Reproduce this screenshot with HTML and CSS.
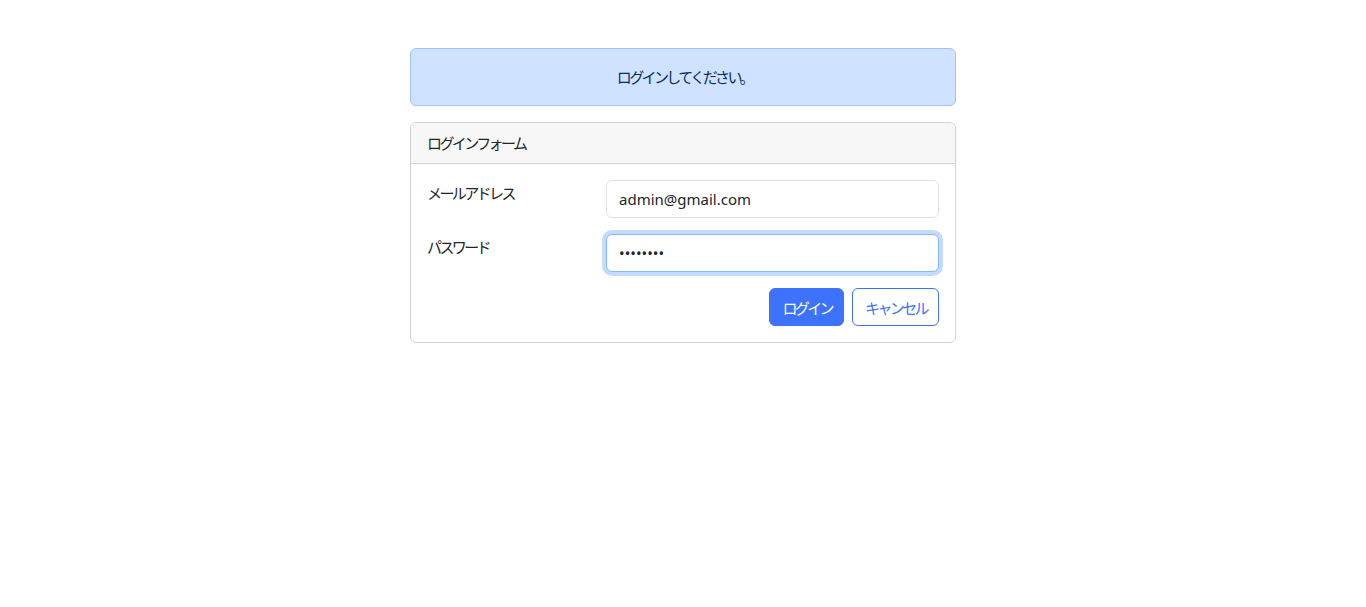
FILE: index.html
```html
<!DOCTYPE html>
<html lang="ja">
<head>
<meta charset="utf-8">
<title>ログイン</title>
<link rel="stylesheet" href="styles.css">
</head>
<body>
<div class="container">
  <div class="alert">ログインしてください。</div>
  <div class="card">
    <div class="card-header">ログインフォーム</div>
    <form class="card-body">
      <div class="row">
        <label class="label" for="email">メールアドレス</label>
        <div class="field"><input id="email" class="input" type="text" value="admin@gmail.com"></div>
      </div>
      <div class="row">
        <label class="label" for="pw">パスワード</label>
        <div class="field"><input id="pw" class="input focus" type="password" value="password"></div>
      </div>
      <div class="actions">
        <button type="button" class="btn btn-primary">ログイン</button>
        <button type="button" class="btn btn-outline">キャンセル</button>
      </div>
    </form>
  </div>
</div>
</body>
</html>
```
FILE: styles.css
```css
* { box-sizing: border-box; }
body {
  margin: 0;
  background: #fff;
  color: #212529;
  font-family: "Noto Sans", "Noto Sans CJK JP", sans-serif;
  font-size: 15px;
  line-height: 24px;
}
.container {
  width: 546px;
  margin: 48px auto 0;
}
.alert, .card-header, .label, .btn {
  font-family: "Noto Sans CJK JP", sans-serif;
  font-size: 15px;
  letter-spacing: -2.6px;
}
.alert {
  background: #cfe2ff;
  border: 1px solid #9ec5fe;
  color: #052c65;
  border-radius: 6px;
  padding: 16px 16px 16px 19px;
  text-align: center;
  margin-bottom: 16px;
}
.card {
  border: 1px solid #d3d3d3;
  border-radius: 6px;
  overflow: hidden;
}
.card-header {
  background: #f7f7f7;
  border-bottom: 1px solid #d3d3d3;
  padding: 8px 16px;
}
.card-body {
  padding: 16px;
  margin: 0;
}
.row {
  display: flex;
  margin-bottom: 16px;
}
.label {
  width: 179px;
  flex: none;
  padding-top: 1px;
}
.field { flex: 1; }
.input {
  display: block;
  width: 100%;
  height: 38px;
  padding: 6px 12px;
  border: 1px solid #dee2e6;
  border-radius: 6px;
  font-family: "Noto Sans", sans-serif;
  font-size: 15px;
  color: #212529;
  background: #fff;
  outline: none;
}
.input.focus {
  border-color: #86b7fe;
  box-shadow: 0 0 0 4px rgba(13, 110, 253, 0.25);
}
.actions {
  display: flex;
  justify-content: flex-end;
  gap: 8px;
}
.btn {
  height: 38px;
  padding: 0 11px 0 12px;
  border-radius: 6px;
  cursor: pointer;
}
.btn-primary {
  background: #3d72fd;
  border: 1px solid #3d72fd;
  color: #fff;
}
.btn-outline {
  background: #fff;
  border: 1px solid #3d72fd;
  color: #3d72fd;
}
```
